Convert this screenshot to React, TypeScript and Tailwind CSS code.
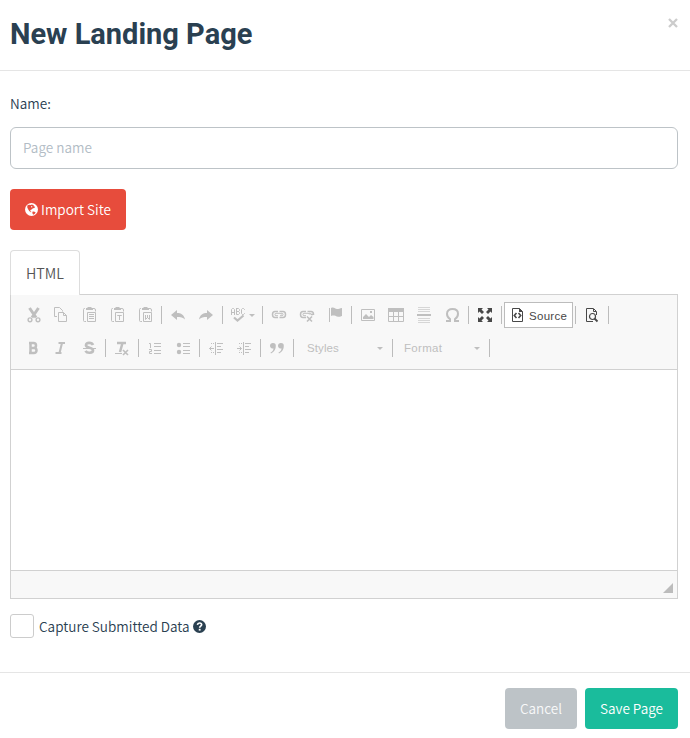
import type { ReactNode } from 'react';

const sans = "font-['Noto_Sans_CJK_SC',sans-serif]";

function Icon({ children, dark = false }: { children: ReactNode; dark?: boolean }) {
  return (
    <svg
      viewBox="0 0 16 16"
      className={`block h-4 w-4 shrink-0 ${dark ? 'text-[#484848]' : 'text-[#bfbfbf]'}`}
      fill="none"
      stroke="currentColor"
      strokeWidth="1"
    >
      {children}
    </svg>
  );
}

function Btn({ children, dark }: { children: ReactNode; dark?: boolean }) {
  return (
    <button className="flex h-[26px] w-7 items-center justify-center">
      <Icon dark={dark}>{children}</Icon>
    </button>
  );
}

const Sep = () => <span className="mx-0.5 h-[18px] w-px bg-[#bcbcbc]" />;

const Caret = () => (
  <svg viewBox="0 0 6 3" className="block h-[3px] w-1.5 text-[#bfbfbf]" fill="currentColor">
    <path d="M0 0h6L3 3z" />
  </svg>
);

const Clipboard = () => (
  <>
    <path d="M4 1.500H3.500Q2.500 1.500 2.500 2.500V13.500Q2.500 14.500 3.500 14.500H5M12 1.500H13Q14.500 1.500 14.500 3V4.500" />
    <path d="M5 1h1.500V0h4v1H12v2H5z" fill="currentColor" stroke="none" />
    <path d="M6.500 5.500h8v9h-8z" />
  </>
);

const Cut = () => (
  <>
    <path d="M4.500 1 11 10.500M13.500 1 7 10.500" strokeWidth="3" />
    <circle cx="5" cy="12.800" r="1.900" strokeWidth="1.400" />
    <circle cx="13" cy="12.800" r="1.900" strokeWidth="1.400" />
  </>
);

const Copy = () => (
  <>
    <path d="M4 9.500H1.500V.5H6.500L9.500 3.500V4.500" />
    <path d="M5.500 5.500H10.500L13.500 8.500V14.500H5.500zM10.500 5.500V8.500H13.500" />
  </>
);

const Undo = () => (
  <path d="M1 8 7 3v3c4 0 7 1.500 8 6.500C13 10.500 10.500 10 7 10v3z" fill="currentColor" stroke="none" />
);

const Link = () => (
  <>
    <path d="M7 10.500H4Q1.500 10.500 1.500 7.500T4 4.500H7M8.500 4.500H12Q14.500 4.500 14.500 7.500T12 10.500H8.500" strokeWidth="1.500" />
    <path d="M7 8.700H5Q4 8.700 4 7.500T5 6.300H9Q10 6.300 10.300 7.500M9 8.700H11Q12 8.700 12 7.500T11 6.300H10" />
  </>
);

function ToolbarTop() {
  return (
    <div className="flex h-[26px] items-center">
      <Btn><Cut /></Btn>
      <Btn><Copy /></Btn>
      <Btn><Clipboard /><path d="M8 7.500h5M8 9.500h5M8 11.500h5" /></Btn>
      <Btn><Clipboard /><path d="M8.500 9V8.500h4V9M10.500 8v5" /></Btn>
      <Btn><Clipboard /><path d="M8.500 8v4.500l2-2 2 2V8M10.500 8v3" /></Btn>
      <Sep />
      <Btn><Undo /></Btn>
      <Btn><g transform="matrix(-1 0 0 1 16 0)"><Undo /></g></Btn>
      <Sep />
      <button className="flex h-[26px] w-[35px] items-center gap-0.5 pl-1.5">
        <Icon>
          <path d="M.5 8V2.500l1-1h1l1 1V8M.5 5.500h3M5.500 1v6.500h2l1-1V5.500l-1-1h-2 2l1-1v-1l-1-1h-2M13.500 3v-.5l-1-1h-1l-1 1v4l1 1h1l1-1V6" />
          <path d="m3 10.500 3.500 3 6-5" strokeWidth="2.200" />
        </Icon>
        <Caret />
      </button>
      <Sep />
      <Btn><Link /></Btn>
      <Btn>
        <Link />
        <path d="M7 8h9v8H7z" fill="#f8f8f8" stroke="none" />
        <path d="M12 7.500h2M8 9.500l5 5M13 9.500l-5 5" strokeWidth="1.600" />
      </Btn>
      <Btn>
        <path d="M2.500 1v14" />
        <path d="M4 1c3-1.500 4 1 6 1s2.500-.5 5-1v8c-2.500 1-3.500 1-5 .5S7 8 4 9z" fill="currentColor" stroke="none" />
      </Btn>
      <Sep />
      <Btn>
        <path d="M1.500 2.500h13v11h-13z" />
        <path d="M3 12V10l3-3 3 3 2-2 2.500 2v2zM10 4h2v2h-2z" fill="currentColor" stroke="none" />
      </Btn>
      <Btn>
        <path d="M.5 1.500h15v13H.5zM5.500 4v11M10.500 4v11M0 9.500h16" />
        <path d="M0 1h16v4H0z" fill="currentColor" stroke="none" />
      </Btn>
      <Btn>
        <path d="M2 .5h12M2 2.500h12M2 4.500h12M2 11.500h12M2 13.500h12M2 15.500h12" opacity=".6" />
        <path d="M1 8h14" strokeWidth="2" />
      </Btn>
      <Btn>
        <path d="M2 14h4v-2C3.500 10.500 3 8.500 3 6.700 3 3.700 5.200 2 8.500 2S14 3.700 14 6.700c0 1.800-.5 3.800-3 5.300v2h4" strokeWidth="2" />
      </Btn>
      <Sep />
      <Btn dark>
        <path d="M1 1h5L4.500 2.500 7 5 5 7 2.500 4.500 1 6zM15 1h-5l1.500 1.500L9 5l2 2 2.500-2.500L15 6zM1 15h5l-1.500-1.500L7 11 5 9l-2.500 2.500L1 10zM15 15h-5l1.500-1.500L9 11l2-2 2.500 2.500L15 10z" fill="currentColor" stroke="none" />
      </Btn>
      <Sep />
      <button className="flex h-[26px] w-[69px] items-center gap-1 border border-[#bcbcbc] bg-white pl-1">
        <Icon dark>
          <path d="M3.500 1.500h7l3 3v10h-10z" />
          <path d="M10 1v4h4z" fill="currentColor" stroke="none" />
          <path d="M7.500 6 5.300 8.500 7.500 11M9.500 6l2.200 2.500L9.500 11" strokeWidth="1.600" />
        </Icon>
        <span className="pt-0.5 font-['Liberation_Sans',sans-serif] text-[11.5px] leading-4 tracking-[0.3px] text-[#484848]">Source</span>
      </button>
      <Sep />
      <Btn dark>
        <path d="M9 14.500H2.500v-13h7l3 3V8M9.500 2v2.500H12" />
        <circle cx="8.500" cy="9.500" r="3" strokeWidth="1.200" />
        <path d="m10.500 11.500 3 3" strokeWidth="1.800" />
      </Btn>
      <Sep />
    </div>
  );
}

function Combo({ label, className }: { label: string; className: string }) {
  return (
    <button className={`flex h-[26px] items-center justify-between pr-[7px] ${className}`}>
      <span className="font-['Liberation_Sans',sans-serif] text-[11.5px] leading-4 text-[#bfbfbf]">{label}</span>
      <Caret />
    </button>
  );
}

const IndentLines = () => (
  <>
    <path d="M7.500 2v13M9 3.500h6M9 6.500h4M9 9.500h6M9 12.500h4" />
    <path d="M3 3.500h1M5 3.500h1M3 12.500h1M5 12.500h1" />
  </>
);

function ToolbarBottom() {
  return (
    <div className="flex h-[26px] items-center">
      <Btn><path d="M5.500 3v10M4 3h4.500a2.300 2.300 0 0 1 0 5H5h4a2.500 2.500 0 0 1 0 5H4" strokeWidth="2.500" /></Btn>
      <Btn><path d="M5.500 3h6.500M2.500 13h6M9 3 6.500 13" strokeWidth="2.100" /></Btn>
      <Btn>
        <path d="M12 5C11 2.500 5 2 5 5.200s7 1.800 7 5c0 3.300-6 3.300-7.500.6" strokeWidth="2.700" />
        <path d="M2 8.500h13" />
      </Btn>
      <Sep />
      <Btn>
        <path d="M3 3h9M8.500 3 6 12" strokeWidth="2.500" />
        <path d="M1 13.500h7" />
        <path d="m9 10 5 5M14 10l-5 5" strokeWidth="1.600" />
      </Btn>
      <Sep />
      <Btn>
        <path d="M7 3.500h7M7 6.500h7M7 10.500h7M7 13.500h7M2 3.500h1.500V8M2 9.500h2.500v2H2.500v2H5" />
      </Btn>
      <Btn>
        <path d="M8 3.500h7M8 6.500h7M8 10.500h7M8 13.500h7" />
        <g fill="currentColor" stroke="none"><circle cx="4" cy="5" r="2.200" /><circle cx="4" cy="12" r="2.200" /></g>
      </Btn>
      <Sep />
      <Btn><IndentLines /><path d="M1.500 8.500H6M3.500 6.500l-2 2 2 2" /></Btn>
      <Btn><IndentLines /><path d="M1 8.500h4.500M3.500 6.500l2 2-2 2" /></Btn>
      <Sep />
      <Btn>
        <path d="M4 3a2.800 2.800 0 0 1 2.800 3C6.800 9 5.500 12 2 13.500L1.500 12.500C3.500 11.500 4.500 10 4.500 8.500A2.800 2.800 0 1 1 4 3zM12 3a2.800 2.800 0 0 1 2.800 3c0 3-1.300 6-4.800 7.500l-.5-1c2-1 3-2.500 3-4A2.800 2.800 0 1 1 12 3z" fill="currentColor" stroke="none" />
      </Btn>
      <Sep />
      <Combo label="Styles" className="w-[94px] pl-[11px] tracking-[0.1px]" />
      <Sep />
      <Combo label="Format" className="w-[92px] pl-[9px] tracking-[0.3px]" />
      <Sep />
    </div>
  );
}

export default function App() {
  return (
    <div className={`flex h-[738px] w-[690px] flex-col overflow-hidden bg-white text-[13.55px] font-[350] text-[#2a4051] ${sans}`}>
      <header className="flex h-[71px] items-start justify-between border-b border-[#e5e5e5] pr-3 pl-2.5">
        <h1 className="pt-4 font-['Roboto',sans-serif] text-[29px] leading-9 font-bold">New Landing Page</h1>
        <button aria-label="Close" className="pt-[18px]">
          <svg viewBox="0 0 10 10" className="block h-2.5 w-2.5 text-[#cccccc]" stroke="currentColor" strokeWidth="2.300">
            <path d="m1 1 8 8M9 1 1 9" />
          </svg>
        </button>
      </header>

      <main className="flex h-[601px] flex-col items-start pr-3 pl-2.5">
        <label className="mt-[22px] h-[21px] leading-[21px]">Name:</label>
        <input
          placeholder="Page name"
          className="mt-[13px] h-[42px] w-full rounded-md border border-[#bdc3c7] px-3 pb-0.5 leading-5 outline-none placeholder:text-[#b2bcc5]"
        />
        <button className="mt-5 flex h-[41px] w-[116px] items-center gap-[3px] rounded bg-[#e74c3c] pl-[15px] text-white">
          <svg viewBox="0 0 13 13" className="block h-[13px] w-[13px] shrink-0">
            <circle cx="6.500" cy="6.500" r="6.500" fill="white" />
            <path d="M2.300 2.500 4 1.700 5.800 2 6.800 1.500 9 2.200 8.300 3 10 3.700 9.500 5 8 5.300 6.500 6.500 5.500 7 5.200 8 6.500 9 5.800 9.300 4.200 8 3 6 2.300 4.500zM7.300 8.800 9 8.500 10.700 9.500 9.800 10.800 8.200 11.700 7.500 10.500z" fill="#e74c3c" />
            <path d="M6 3.200 7.200 3 7.300 4.200 6.300 4.400z" fill="white" />
          </svg>
          <span>Import Site</span>
        </button>

        <div className="z-10 mt-5 -mb-px flex h-[45px] w-[70px] items-center justify-center rounded-t border border-b-0 border-[#dddddd] bg-white text-[14.3px] text-[#555555]">
          HTML
        </div>
        <section className="flex h-[305px] w-full flex-col border border-[#d1d1d1]">
          <div className="flex h-[75px] flex-col gap-[7px] border-b border-[#d1d1d1] bg-[#f8f8f8] pt-[7px] pl-2">
            <ToolbarTop />
            <ToolbarBottom />
          </div>
          <div className="flex-1 bg-white" />
          <div className="flex h-[28px] items-end justify-end border-t border-[#d1d1d1] bg-[#f8f8f8] pr-1 pb-[5px]">
            <svg viewBox="0 0 10 10" className="block h-2.5 w-2.5"><path d="M0 10 10 0v10z" fill="#bcbcbc" /></svg>
          </div>
        </section>

        <label className="mt-[15px] flex h-6 items-center">
          <span className="h-6 w-6 rounded-[3px] border border-[#cccccc]" />
          <span className="ml-[5px]">Capture Submitted Data</span>
          <svg viewBox="0 0 14 14" className="ml-[3px] block h-[13px] w-[13px]">
            <circle cx="7" cy="7" r="7" fill="#2a4051" />
            <path d="M4.800 5.200C5 3.600 6 3.200 7 3.200c1.300 0 2.300.7 2.300 1.900C9.300 6.700 7.200 6.500 7.200 8.300" fill="none" stroke="white" strokeWidth="1.800" />
            <path d="M6.200 9.500H8.200v1.900h-2z" fill="white" />
          </svg>
        </label>
      </main>

      <footer className="flex h-[66px] justify-end gap-2 border-t border-[#e5e5e5] pt-[15px] pr-3 text-white">
        <button className="h-[41px] w-[72px] rounded bg-[#bdc3c7]"><span className="opacity-90">Cancel</span></button>
        <button className="h-[41px] w-[93px] rounded bg-[#1abc9c]">Save Page</button>
      </footer>
    </div>
  );
}
